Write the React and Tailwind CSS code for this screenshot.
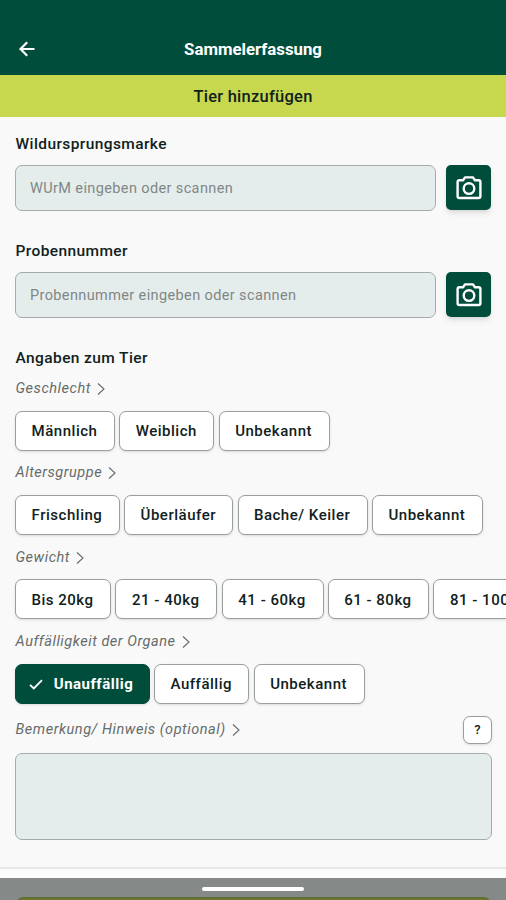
import React, { useState } from 'react';
import clsx from 'clsx';

const groups = [
  {
    title: 'Geschlecht',
    options: [
      { label: 'Männlich', width: 'w-[100px]' },
      { label: 'Weiblich', width: 'w-[95px]' },
      { label: 'Unbekannt', width: 'w-[111px]' },
    ],
  },
  {
    title: 'Altersgruppe',
    options: [
      { label: 'Frischling', width: 'w-[105px]' },
      { label: 'Überläufer', width: 'w-[109px]' },
      { label: 'Bache/ Keiler', width: 'w-[130px]' },
      { label: 'Unbekannt', width: 'w-[111px]' },
    ],
  },
  {
    title: 'Gewicht',
    options: [
      { label: 'Bis 20kg', width: 'w-[96px]' },
      { label: '21 - 40kg', width: 'w-[102px]' },
      { label: '41 - 60kg', width: 'w-[102px]' },
      { label: '61 - 80kg', width: 'w-[101px]' },
      { label: '81 - 100kg', width: 'w-[111px]' },
    ],
  },
  {
    title: 'Auffälligkeit der Organe',
    options: [
      { label: 'Unauffällig', width: 'w-[135px]' },
      { label: 'Auffällig', width: 'w-[95px]' },
      { label: 'Unbekannt', width: 'w-[111px]' },
    ],
  },
];

function BackIcon() {
  return (
    <svg width="18" height="18" viewBox="0 0 18 18" fill="none" stroke="currentColor" strokeWidth="2.2">
      <path d="M16.5 9H3M9.2 2.2L2.5 9L9.2 15.8" />
    </svg>
  );
}

function CameraIcon() {
  return (
    <svg width="26" height="24" viewBox="0 0 26 24" fill="none" stroke="currentColor" strokeWidth="2.4" strokeLinejoin="round">
      <path d="M3.4 4.2H7.2L9 1.4H17L18.8 4.2H22.6Q24.4 4.2 24.4 6V20.2Q24.4 22 22.6 22H3.4Q1.6 22 1.6 20.2V6Q1.6 4.2 3.4 4.2Z" />
      <circle cx="13" cy="12.6" r="5.3" />
    </svg>
  );
}

function ChevronIcon() {
  return (
    <svg width="8" height="12" viewBox="0 0 8 12" fill="none" stroke="currentColor" strokeWidth="1.1">
      <path d="M1 0.5L7 6L1 11.5" />
    </svg>
  );
}

function CheckIcon() {
  return (
    <svg width="14" height="11" viewBox="0 0 14 11" fill="none" stroke="currentColor" strokeWidth="1.8">
      <path d="M1 5.8L4.8 9.4L13 1.2" />
    </svg>
  );
}

function ScanField({ label, placeholder }) {
  return (
    <div className="h-[107px]">
      <label className="block h-5 pl-[0.5px] text-[15.5px] leading-5 font-medium tracking-[0.4px] text-[#10211c]">{label}</label>
      <div className="mt-[11px] flex gap-[10px]">
        <input
          type="text"
          placeholder={placeholder}
          className="h-[46px] w-[421px] rounded-[7px] border border-[#a4abaa] bg-[#e5edec] px-[14px] text-[14.5px] tracking-[0.38px] outline-none placeholder:text-[#7f8786]"
        />
        <button className="flex h-[45px] w-[45px] items-center justify-center rounded-[5px] bg-[#004d3b] text-white shadow-md">
          <CameraIcon />
        </button>
      </div>
    </div>
  );
}

function SectionTitle({ children }) {
  return (
    <div className="flex h-5 items-center gap-[6px] pl-[0.5px] text-[14.5px] leading-5 tracking-[0.53px] text-[#666c6a] italic">
      <span>{children}</span>
      <ChevronIcon />
    </div>
  );
}

function Chip({ option, selected, onClick }) {
  return (
    <button
      onClick={onClick}
      className={clsx(
        'flex h-10 shrink-0 items-center justify-center rounded-[7px] border pt-[1px] text-[15px] whitespace-nowrap shadow-sm',
        option.width,
        selected
          ? 'gap-[11px] border-[#004d3b] bg-[#004d3b] pr-[3px] font-bold tracking-[0.5px] text-white'
          : 'border-[#999f9d] bg-white pr-[1px] font-medium tracking-[0.52px] text-[#10211c]'
      )}
    >
      {selected && <CheckIcon />}
      {option.label}
    </button>
  );
}

export default function App() {
  const [values, setValues] = useState({ 'Auffälligkeit der Organe': 'Unauffällig' });

  return (
    <div className="flex h-[900px] w-[506px] flex-col overflow-hidden bg-[#f9f9f9] font-['Roboto',sans-serif]">
      <header className="grid h-[75px] shrink-0 grid-cols-[1fr_auto_1fr] items-end bg-[#004d3b] pb-[16px] text-white">
        <button className="mb-[1px] ml-[18px] w-[18px]">
          <BackIcon />
        </button>
        <h1 className="h-5 text-[16.8px] leading-5 font-bold">Sammelerfassung</h1>
      </header>
      <div className="flex h-[42px] shrink-0 items-center justify-center bg-[#c7d84f] pt-[3px] text-[16.5px] font-medium tracking-[0.25px] text-[#10211c]">
        Tier hinzufügen
      </div>

      <main className="h-[750px] shrink-0 overflow-hidden px-[15px] pt-[17px]">
        <ScanField label="Wildursprungsmarke" placeholder="WUrM eingeben oder scannen" />
        <ScanField label="Probennummer" placeholder="Probennummer eingeben oder scannen" />

        <h2 className="h-[31px] pl-[0.5px] text-[15.5px] leading-5 font-medium tracking-[0.4px] text-[#10211c]">Angaben zum Tier</h2>

        {groups.map((group) => (
          <section key={group.title} className="h-[84.4px]">
            <SectionTitle>{group.title}</SectionTitle>
            <div className="mt-[11.5px] flex gap-[4.3px]">
              {group.options.map((option) => (
                <Chip
                  key={option.label}
                  option={option}
                  selected={values[group.title] === option.label}
                  onClick={() => setValues({ ...values, [group.title]: option.label })}
                />
              ))}
            </div>
          </section>
        ))}

        <div className="mt-[-5px] flex h-[36px] items-center justify-between">
          <SectionTitle>Bemerkung/ Hinweis (optional)</SectionTitle>
          <button className="mr-[-1px] h-[28px] w-[29px] rounded-[7px] border border-[#999f9d] bg-white text-[13px] font-medium text-[#10211c] shadow-sm">
            ?
          </button>
        </div>
        <textarea className="mt-[5px] block h-[87px] w-[477px] resize-none rounded-[7px] border border-[#a4abaa] bg-[#e5edec] outline-none" />
      </main>

      <div className="h-[11px] shrink-0 border-t-2 border-[#e8e8e8] bg-[#fcfcfc]" />
      {/* system navigation bar, dims the submit button below it */}
      <div className="flex h-[22px] shrink-0 flex-col items-center bg-[#858a89] pt-[9px]">
        <div className="h-1 w-[102px] shrink-0 rounded-full bg-white" />
        <div className="mt-[6px] h-6 w-[475px] shrink-0 rounded-[7px] border border-[#5e6b32] bg-[#69762f]" />
      </div>
    </div>
  );
}
